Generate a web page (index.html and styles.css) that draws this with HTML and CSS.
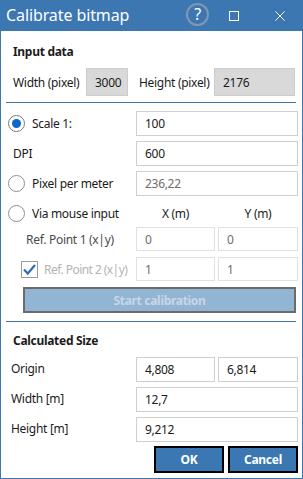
FILE: index.html
```html
<!DOCTYPE html>
<html>
<head>
<meta charset="utf-8">
<link rel="stylesheet" href="styles.css">
</head>
<body>
<div class="window">
  <div class="titlebar">
    <span class="title">Calibrate bitmap</span>
    <span class="help">?</span>
    <span class="maxbox"></span>
    <svg class="close" width="10" height="10" viewBox="0 0 10 10"><path d="M0.5 0.5 L9.5 9.5 M9.5 0.5 L0.5 9.5" stroke="#fff" stroke-width="1" fill="none"/></svg>
  </div>
  <div class="content">
    <div class="heading">Input data</div>
    <div class="pixel-row">
      <span class="lbl lbl-w">Width (pixel)</span>
      <div class="field ro">3000</div>
      <span class="lbl lbl-h">Height (pixel)</span>
      <div class="field ro">2176</div>
    </div>
    <div class="sep"></div>

    <div class="grid-row r1">
      <label class="radio"><span class="dot checked"></span>Scale 1:</label>
      <div class="field span2">100</div>
    </div>
    <div class="grid-row r2">
      <span class="lbl lbl-dpi">DPI</span>
      <div class="field span2">600</div>
    </div>
    <div class="grid-row r3">
      <label class="radio"><span class="dot"></span>Pixel per meter</label>
      <div class="field span2 dim">236,22</div>
    </div>
    <div class="grid-row r4">
      <label class="radio"><span class="dot"></span>Via mouse input</label>
      <span class="colhead">X (m)</span>
      <span class="colhead">Y (m)</span>
    </div>
    <div class="grid-row r5">
      <span class="lbl lbl-ref1">Ref. Point 1 (x|y)</span>
      <div class="field light dim">0</div>
      <div class="field light dim">0</div>
    </div>
    <div class="grid-row r6">
      <label class="check"><span class="box"><svg width="15" height="15" viewBox="0 0 15 15"><path d="M2 7.5 L5.8 11.5 L13 3" stroke="#2f6dbb" stroke-width="2.2" fill="none"/></svg></span><span class="ref2">Ref. Point 2 (x|y)</span></label>
      <div class="field light dim">1</div>
      <div class="field light dim">1</div>
    </div>
    <div class="startbtn">Start calibration</div>
    <div class="sep sep2"></div>

    <div class="heading heading2">Calculated Size</div>
    <div class="grid-row c1">
      <span class="lbl lbl-c">Origin</span>
      <div class="field">4,808</div>
      <div class="field">6,814</div>
    </div>
    <div class="grid-row c2">
      <span class="lbl lbl-c">Width [m]</span>
      <div class="field span2">12,7</div>
    </div>
    <div class="grid-row c2">
      <span class="lbl lbl-c">Height [m]</span>
      <div class="field span2">9,212</div>
    </div>
    <div class="actions">
      <div class="btn">OK</div>
      <div class="btn">Cancel</div>
    </div>
  </div>
</div>
</body>
</html>
```

FILE: styles.css
```css
* { box-sizing: border-box; }
html, body { margin: 0; padding: 0; }
body {
  width: 303px;
  height: 479px;
  background: #fff;
  font-family: "Noto Sans", "Segoe UI", sans-serif;
  font-size: 12px;
  letter-spacing: -0.3px;
  color: #1b1b1b;
  overflow: hidden;
}
.window {
  width: 303px;
  height: 479px;
  border: 1px solid #3c77b2;
  border-top: 0;
  display: flex;
  flex-direction: column;
}
.titlebar {
  height: 31px;
  flex: none;
  background: #3c77b2;
  color: #fff;
  display: flex;
  align-items: center;
  margin: 0 -1px;
  padding-right: 18px;
}
.title {
  flex: 1;
  font-size: 16px;
  letter-spacing: -0.1px;
  padding-left: 6px;
  padding-bottom: 2px;
}
.help {
  width: 23px;
  height: 23px;
  border: 2px solid #8397ad;
  border-radius: 50%;
  display: flex;
  align-items: center;
  justify-content: center;
  font-size: 16px;
  line-height: 1;
  margin-right: 20px;
  margin-bottom: 3px;
}
.maxbox {
  width: 10px;
  height: 10px;
  border: 1px solid #fff;
  margin-right: 36px;
  margin-top: 1px;
}
.close { margin-top: 1px; }

.content {
  flex: 1;
  display: flex;
  flex-direction: column;
  padding: 0 6px 0 4px;
}
.heading {
  font-weight: 700;
  height: 16px;
  line-height: 16px;
  padding-left: 8px;
  margin-top: 13px;
}
.pixel-row {
  display: grid;
  grid-template-columns: 81px 42px 86px 81px;
  height: 28px;
  margin-top: 8px;
  align-items: center;
}
.lbl { white-space: nowrap; }
.lbl-w { padding-left: 8px; }
.lbl-h { padding-left: 11px; }
.field {
  height: 100%;
  border: 1px solid #cfcfcf;
  background: #fff;
  display: flex;
  align-items: center;
  padding-left: 8px;
  white-space: nowrap;
}
.field.ro { background: #d9d9d9; border-color: #cccccc; }
.field.light { border-color: #e1e1e1; }
.field.dim { color: #6d6d6d; }
.span2 { grid-column: 2 / span 2; }

.sep {
  height: 1px;
  flex: none;
  background: #3f73a8;
  margin: 6px 0 0 1px;
}
.sep2 { margin-top: 8px; }

.grid-row {
  display: grid;
  grid-template-columns: 128px 79px 80px;
  column-gap: 3px;
  align-items: center;
  flex: none;
}
.r1 { margin-top: 8px; height: 25px; }
.r2 { margin-top: 5px; height: 25px; }
.r3 { margin-top: 5px; height: 25px; }
.r4 { margin-top: 3px; height: 28px; }
.r5 { height: 24px; }
.r6 { margin-top: 6px; height: 24px; }

.radio {
  display: flex;
  align-items: center;
  gap: 7px;
  padding-left: 3px;
  white-space: nowrap;
}
.dot {
  width: 17px;
  height: 17px;
  border: 1px solid #8f8f8f;
  border-radius: 50%;
  background: #fff;
  display: flex;
  align-items: center;
  justify-content: center;
  flex: none;
}
.dot.checked { border-color: #7a7a7a; }
.dot.checked::after {
  content: "";
  width: 9px;
  height: 9px;
  border-radius: 50%;
  background: #0b67c8;
}
.lbl-dpi { padding-left: 8px; }
.lbl-ref1 { padding-left: 21px; color: #4a4a4a; }
.colhead { text-align: center; }
.check {
  display: flex;
  align-items: center;
  gap: 6px;
  padding-left: 16px;
  color: #b4b4b4;
  white-space: nowrap;
  overflow: hidden;
}
.ref2 { letter-spacing: -0.55px; }
.box {
  width: 17px;
  height: 17px;
  border: 1px solid #9c9c9c;
  display: flex;
  align-items: center;
  justify-content: center;
  flex: none;
}
.startbtn {
  margin: 6px 0 0 18px;
  height: 26px;
  flex: none;
  border: 2px solid #6b6b6b;
  background: #93b5d4;
  color: #c6d7e7;
  font-weight: 700;
  display: flex;
  align-items: center;
  justify-content: center;
}
.heading2 { margin-top: 11px; }
.lbl-c { padding-left: 6px; padding-bottom: 2px; }
.c1 { margin-top: 8px; height: 25px; }
.c2 { margin-top: 5px; height: 25px; }
.actions {
  display: flex;
  justify-content: flex-end;
  gap: 4px;
  margin-top: 4px;
  margin-right: -2px;
}
.btn {
  width: 70px;
  height: 27px;
  border: 2px solid #000;
  background: #3a77b3;
  color: #fff;
  font-weight: 700;
  display: flex;
  align-items: center;
  justify-content: center;
}
```
